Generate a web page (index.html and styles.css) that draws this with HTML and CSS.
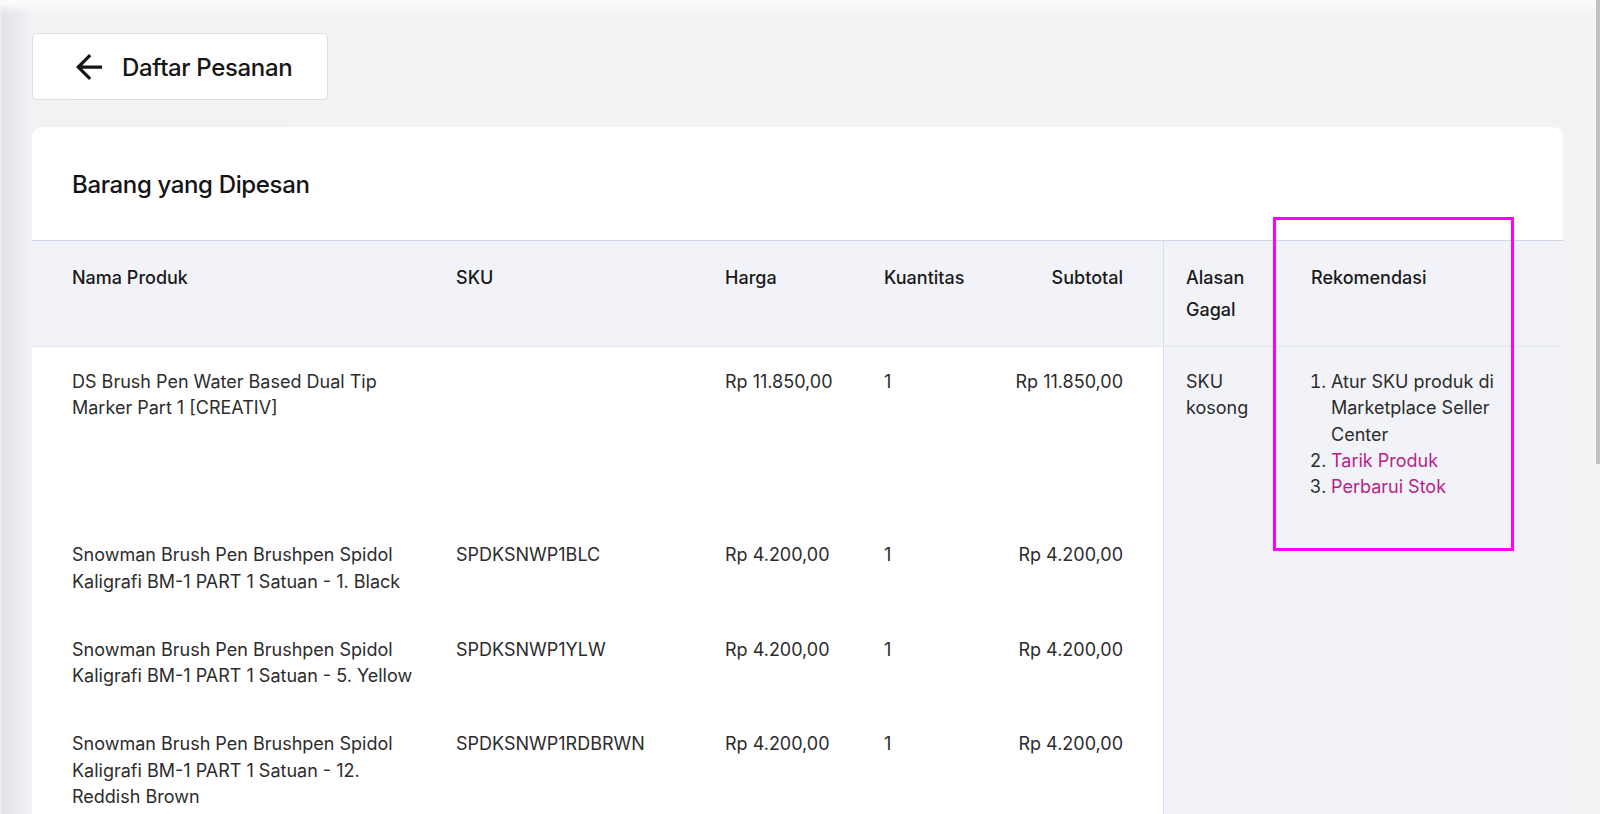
FILE: index.html
```html
<!DOCTYPE html>
<html lang="id">
<head>
<meta charset="utf-8">
<title>Detail Pesanan</title>
<link rel="stylesheet" href="styles.css">
</head>
<body>
<div class="page">
  <a class="back-btn" href="#">
    <svg class="back-icon" viewBox="4 4 16 16" width="26" height="26" aria-hidden="true"><path d="M20 11H7.83l5.59-5.59L12 4l-8 8 8 8 1.41-1.41L7.83 13H20v-2z" fill="currentColor"/></svg>
    <span>Daftar Pesanan</span>
  </a>
  <section class="card">
    <h2 class="card-title">Barang yang Dipesan</h2>
    <table class="items">
      <colgroup>
        <col class="c-name"><col class="c-sku"><col class="c-price"><col class="c-qty"><col class="c-sub"><col class="c-reason"><col class="c-rec">
      </colgroup>
      <thead>
        <tr>
          <th class="name">Nama Produk</th>
          <th>SKU</th>
          <th>Harga</th>
          <th>Kuantitas</th>
          <th class="sub">Subtotal</th>
          <th class="reason">Alasan Gagal</th>
          <th class="rec">Rekomendasi</th>
        </tr>
      </thead>
      <tbody>
        <tr>
          <td class="name">DS Brush Pen Water Based Dual Tip Marker Part 1 [CREATIV]</td>
          <td></td>
          <td>Rp 11.850,00</td>
          <td>1</td>
          <td class="sub">Rp 11.850,00</td>
          <td class="reason">SKU kosong</td>
          <td class="rec">
            <ol class="rec-list">
              <li>Atur SKU produk di Marketplace Seller Center</li>
              <li><a href="#">Tarik Produk</a></li>
              <li><a href="#">Perbarui Stok</a></li>
            </ol>
          </td>
        </tr>
        <tr>
          <td class="name">Snowman Brush Pen Brushpen Spidol Kaligrafi BM-1 PART 1 Satuan - 1. Black</td>
          <td>SPDKSNWP1BLC</td>
          <td>Rp 4.200,00</td>
          <td>1</td>
          <td class="sub">Rp 4.200,00</td>
          <td class="reason"></td>
          <td class="rec"></td>
        </tr>
        <tr>
          <td class="name">Snowman Brush Pen Brushpen Spidol Kaligrafi BM-1 PART 1 Satuan - 5. Yellow</td>
          <td>SPDKSNWP1YLW</td>
          <td>Rp 4.200,00</td>
          <td>1</td>
          <td class="sub">Rp 4.200,00</td>
          <td class="reason"></td>
          <td class="rec"></td>
        </tr>
        <tr>
          <td class="name">Snowman Brush Pen Brushpen Spidol Kaligrafi BM-1 PART 1 Satuan - 12. Reddish Brown</td>
          <td>SPDKSNWP1RDBRWN</td>
          <td>Rp 4.200,00</td>
          <td>1</td>
          <td class="sub">Rp 4.200,00</td>
          <td class="reason"></td>
          <td class="rec"></td>
        </tr>
      </tbody>
    </table>
  </section>
</div>
<div class="annotation"></div>
<div class="scroll-thumb"></div>
</body>
</html>
```

FILE: styles.css
```css
* { box-sizing: border-box; }

html {
  overflow: hidden;
  background: #f3f3f5;
}

body {
  margin: 0;
  min-height: 100vh;
  font-family: Inter, "Noto Sans", "Liberation Sans", sans-serif;
  color: #2c2c2c;
  background-color: #f3f3f5;
  background-image:
    linear-gradient(to bottom, #fbfbfc 0, #fbfbfc 3px, rgba(243,243,245,0) 14px),
    linear-gradient(to right, #f2f2f5 0, #e3e3eb 2px, #e9e9ef 18px, #f2f2f5 32px, #f3f3f5 100%);
}

.page {
  padding: 33px 37px 0 32px;
}

.back-btn {
  display: inline-flex;
  align-items: center;
  gap: 20px;
  height: 67px;
  padding: 1px 35px 0 43px;
  background: #fff;
  border: 1px solid #d9dde4;
  border-radius: 5px;
  color: #161616;
  text-decoration: none;
  font-size: 24px;
  font-weight: 500;
  letter-spacing: -0.35px;
}

.back-icon {
  display: block;
  flex: none;
}

.card {
  margin-top: 27px;
  background: #fff;
  border-radius: 10px 10px 0 0;
  padding-top: 42px;
}

.card-title {
  margin: 0 0 39px;
  padding-left: 40px;
  font-size: 24px;
  line-height: 32px;
  font-weight: 500;
  color: #141414;
  letter-spacing: -0.35px;
}

.items {
  width: 100%;
  border-collapse: separate;
  border-spacing: 0;
  table-layout: fixed;
  font-size: 18px;
}

.c-name { width: 402px; }
.c-sku { width: 269px; }
.c-price { width: 159px; }
.c-qty { width: 125px; }
.c-sub { width: 176px; }
.c-reason { width: 126px; }
.c-rec { width: 274px; }

.items th,
.items td {
  text-align: left;
  vertical-align: top;
  padding-left: 22px;
  padding-right: 22px;
}

.items th {
  background: #f2f3f8;
  border-top: 1px solid #cfd6e7;
  border-bottom: 1px solid #e5e7ee;
  padding-top: 21px;
  padding-bottom: 20px;
  line-height: 32px;
  font-weight: 500;
  color: #1a1a1a;
}

.items td {
  padding-top: 22px;
  padding-bottom: 20px;
  line-height: 26.25px;
  font-weight: 400;
  color: #2c2c2c;
}

.items .name { padding-left: 40px; padding-right: 14px; }
.items .sub { text-align: right; padding-right: 40px; }

.items .reason,
.items .rec {
  background: #f2f3f8;
}

.items .reason {
  border-left: 1px solid #d8dce6;
}

.rec-list {
  margin: 0;
  padding-left: 20px;
}

.rec-list a {
  color: #b8228a;
  text-decoration: none;
}

.annotation {
  position: absolute;
  left: 1273px;
  top: 217px;
  width: 241px;
  height: 334px;
  border: 3px solid #ff00ff;
  pointer-events: none;
}

.scroll-thumb {
  position: fixed;
  top: 0;
  right: 0;
  width: 4px;
  height: 464px;
  background: #c2c2c4;
}
```
